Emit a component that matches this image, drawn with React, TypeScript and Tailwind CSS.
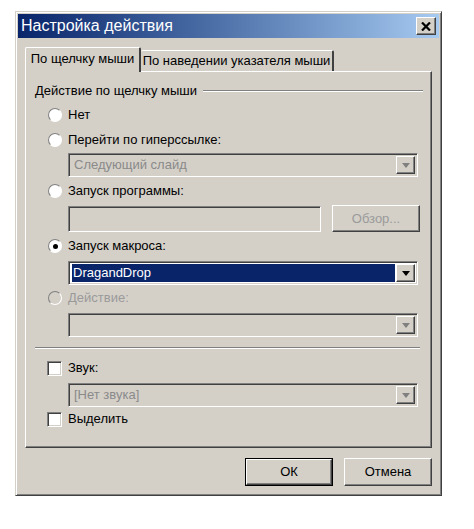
import React from 'react';

const raised =
  'border border-t-white border-l-white border-b-[#404040] border-r-[#404040] shadow-[inset_-1px_-1px_0_#808080,inset_1px_1px_0_#d4d0c8]';
const sunken =
  'border border-t-[#808080] border-l-[#808080] border-b-white border-r-white shadow-[inset_1px_1px_0_#404040,inset_-1px_-1px_0_#d4d0c8]';

function Arrow({ disabled }: { disabled?: boolean }) {
  return (
    <div className={`w-[19px] h-full flex items-center justify-center bg-[#d4d0c8] ${raised}`}>
      <svg width="8" height="5" viewBox="0 0 8 5">
        <path d="M0 0h8L4 5z" fill={disabled ? '#808080' : '#000'} />
      </svg>
    </div>
  );
}

function Combo({ value, active, disabled }: { value?: string; active?: boolean; disabled?: boolean }) {
  return (
    <div className={`ml-[33px] w-[350px] h-[24px] flex ${sunken} ${active ? 'bg-white' : 'bg-[#d4d0c8]'} p-[2px]`}>
      <div className="flex-1 flex items-center px-[1px]">
        {active ? (
          <span className="h-[18px] w-full bg-[#0a246a] text-white flex items-center px-[1px]">{value}</span>
        ) : (
          <span className="text-[#8a8a8a] px-[2px]">{value}</span>
        )}
      </div>
      <Arrow disabled={disabled} />
    </div>
  );
}

function Radio({ label, checked, disabled }: { label: string; checked?: boolean; disabled?: boolean }) {
  return (
    <div className="flex items-center h-[20px] ml-[13px]">
      <div
        className={`w-[14px] h-[14px] rounded-full flex items-center justify-center border border-t-[#808080] border-l-[#808080] border-b-white border-r-white ${
          disabled ? 'bg-[#d4d0c8]' : 'bg-white'
        }`}
      >
        {checked && <div className="w-[5px] h-[5px] rounded-full bg-black" />}
      </div>
      <span className={`ml-[6px] ${disabled ? 'text-[#9a9a9a]' : 'text-black'}`}>{label}</span>
    </div>
  );
}

function Check({ label }: { label: string }) {
  return (
    <div className="flex items-center h-[20px] ml-[12px]">
      <div className={`w-[15px] h-[15px] bg-white ${sunken}`} />
      <span className="ml-[6px]">{label}</span>
    </div>
  );
}

export default function App() {
  return (
    <div
      className="min-h-screen bg-white pt-[11px] pl-[15px] text-[13px] text-black"
      style={{ fontFamily: '"Liberation Sans", Arial, sans-serif' }}
    >
      <div className="w-[427px] h-[485px] bg-[#d4d0c8] border border-t-[#d4d0c8] border-l-[#d4d0c8] border-b-[#404040] border-r-[#404040] shadow-[inset_1px_1px_0_white,inset_-1px_-1px_0_#808080] p-[2px] flex flex-col">
        {/* title bar */}
        <div className="h-[24px] bg-gradient-to-r from-[#0a246a] to-[#a6caf0] flex items-center justify-between pl-[3px] pr-[3px]">
          <span className="text-white text-[16px] leading-none">Настройка действия</span>
          <div className={`w-[20px] h-[18px] flex items-center justify-center bg-[#d4d0c8] ${raised}`}>
            <svg width="10" height="9" viewBox="0 0 10 9">
              <path d="M1 0.5L9 8.5M9 0.5L1 8.5" stroke="#000" strokeWidth="2.2" />
            </svg>
          </div>
        </div>

        {/* tabs */}
        <div className="flex items-end ml-[7px] mt-[8px] h-[25px] relative z-10">
          <div className="h-[25px] w-[116px] bg-[#d4d0c8] border-t border-l border-white border-r-2 border-r-[#404040] rounded-t-[2px] flex items-center justify-center pb-[2px] -mb-[1px]">
            По щелчку мыши
          </div>
          <div className="h-[21px] w-[193px] border-t border-white border-r-2 border-r-[#404040] rounded-t-[2px] flex items-center justify-center">
            По наведении указателя мыши
          </div>
        </div>

        {/* panel */}
        <div className="ml-[7px] w-[407px] h-[377px] border border-t-white border-l-white border-b-[#404040] border-r-[#404040] shadow-[inset_-1px_-1px_0_#808080] pl-[9px] pt-[11px]">
          <div className="flex items-center h-[16px]">
            <span>Действие по щелчку мыши</span>
            <div className="ml-[6px] w-[220px] h-[2px] border-t border-[#808080] border-b border-b-white" />
          </div>
          <div className="mt-[6px]">
            <Radio label="Нет" />
          </div>
          <div className="mt-[5px]">
            <Radio label="Перейти по гиперссылке:" />
          </div>
          <div className="mt-[3px]">
            <Combo value="Следующий слайд" disabled />
          </div>
          <div className="mt-[4px]">
            <Radio label="Запуск программы:" />
          </div>
          <div className="mt-[4px] flex items-center">
            <div className={`ml-[33px] w-[253px] h-[26px] bg-[#d4d0c8] ${sunken}`} />
            <div className={`ml-[11px] w-[88px] h-[27px] flex items-center justify-center text-[#9a9a9a] ${raised}`}>
              Обзор...
            </div>
          </div>
          <div className="mt-[4px]">
            <Radio label="Запуск макроса:" checked />
          </div>
          <div className="mt-[5px]">
            <Combo value="DragandDrop" active />
          </div>
          <div className="mt-[3px]">
            <Radio label="Действие:" disabled />
          </div>
          <div className="mt-[5px]">
            <Combo disabled />
          </div>
          <div className="mt-[10px] w-[385px] h-[2px] border-t border-[#808080] border-b border-b-white" />
          <div className="mt-[9px]">
            <Check label="Звук:" />
          </div>
          <div className="mt-[5px]">
            <Combo value="[Нет звука]" disabled />
          </div>
          <div className="mt-[2px]">
            <Check label="Выделить" />
          </div>
        </div>

        {/* buttons */}
        <div className="flex justify-end gap-[11px] mt-[10px] pr-[7px]">
          <div className="w-[88px] h-[28px] border border-black flex">
            <div className={`flex-1 flex items-center justify-center ${raised}`}>ОК</div>
          </div>
          <div className={`w-[88px] h-[28px] flex items-center justify-center ${raised}`}>Отмена</div>
        </div>
      </div>
    </div>
  );
}
